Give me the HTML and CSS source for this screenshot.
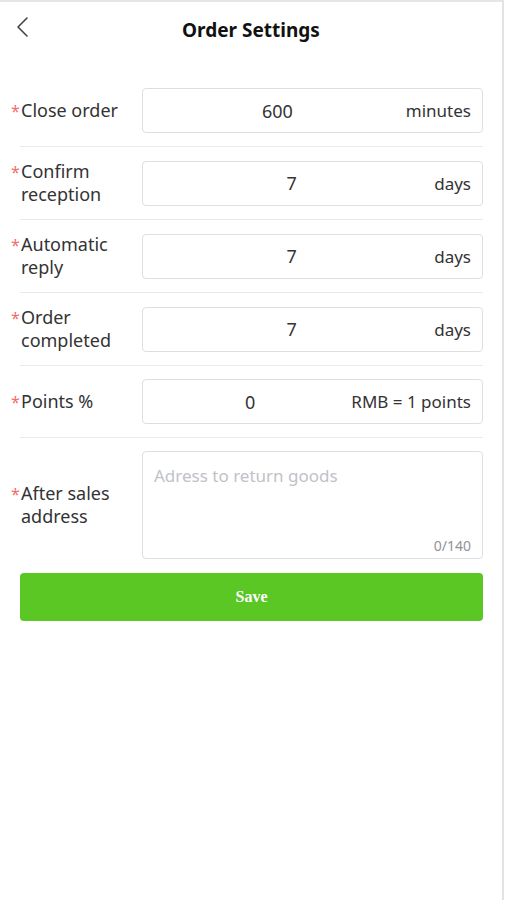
FILE: index.html
```html
<!DOCTYPE html>
<html>
<head>
<meta charset="utf-8">
<link rel="stylesheet" href="styles.css">
</head>
<body>
<div class="page">
  <header class="header">
    <span class="back">
      <svg width="16" height="22" viewBox="0 0 16 22"><path d="M12 2 L3 11 L12 20" fill="none" stroke="#444" stroke-width="1.6" stroke-linecap="round" stroke-linejoin="round"/></svg>
    </span>
    <h1 class="title">Order Settings</h1>
  </header>
  <form class="form">
    <div class="row">
      <label class="label"><span class="req">*</span><span>Close order</span></label>
      <div class="field"><span class="value">600</span><span class="unit">minutes</span></div>
    </div>
    <div class="row">
      <label class="label"><span class="req">*</span><span>Confirm reception</span></label>
      <div class="field"><span class="value">7</span><span class="unit">days</span></div>
    </div>
    <div class="row">
      <label class="label"><span class="req">*</span><span>Automatic reply</span></label>
      <div class="field"><span class="value">7</span><span class="unit">days</span></div>
    </div>
    <div class="row">
      <label class="label"><span class="req">*</span><span>Order completed</span></label>
      <div class="field"><span class="value">7</span><span class="unit">days</span></div>
    </div>
    <div class="row">
      <label class="label"><span class="req">*</span><span>Points %</span></label>
      <div class="field"><span class="value">0</span><span class="unit">RMB = 1 points</span></div>
    </div>
    <div class="row row-last">
      <label class="label"><span class="req">*</span><span>After sales address</span></label>
      <div class="textarea"><span class="placeholder">Adress to return goods</span><span class="count">0/140</span></div>
    </div>
    <button type="button" class="save">Save</button>
  </form>
</div>
</body>
</html>
```
FILE: styles.css
```css
html, body {
  margin: 0;
  padding: 0;
  background: #fff;
}
body {
  font-family: "Noto Sans", "Open Sans", sans-serif;
  color: #333;
}
.page {
  width: 502px;
  height: 898px;
  border-top: 2px solid #e6e6e6;
  border-right: 2px solid #e2e2e2;
  background: #fff;
}
.header {
  height: 56px;
  display: flex;
  align-items: center;
  justify-content: center;
  position: relative;
}
.back {
  position: absolute;
  left: 15px;
  top: 14px;
  display: flex;
}
.title {
  margin: 0;
  font-size: 19px;
  font-weight: 700;
  color: #111;
}
.form {
  padding: 0 19px 0 20px;
  margin-top: 30px;
}
.row {
  display: flex;
  align-items: center;
  padding: 13px 0;
  border-bottom: 1px solid #e9e9e9;
}
.row:first-child {
  padding-top: 0;
}
.row-last {
  border-bottom: none;
  padding-bottom: 14px;
}
.label {
  width: 121px;
  display: flex;
  font-size: 18px;
  line-height: 23px;
  color: #333;
  position: relative;
  padding-left: 1px;
}
.req {
  position: absolute;
  left: -9px;
  top: 1px;
  color: #f56c6c;
  font-size: 16px;
}
.field {
  flex: 1;
  height: 43px;
  border: 1px solid #dcdfe6;
  border-radius: 4px;
  display: flex;
  align-items: center;
  padding: 0 11px 0 10px;
  gap: 4px;
  font-size: 17px;
}
.value {
  flex: 1;
  text-align: center;
  color: #333;
  font-size: 18px;
}
.unit {
  color: #333;
}
.textarea {
  flex: 1;
  border: 1px solid #dcdfe6;
  border-radius: 4px;
  position: relative;
  padding: 12px 11px;
  box-sizing: border-box;
  height: 108px;
}
.placeholder {
  display: block;
  color: #bfc2c8;
  font-size: 17px;
  line-height: 24px;
}
.count {
  position: absolute;
  right: 11px;
  bottom: 3px;
  font-size: 14px;
  color: #909399;
}
.save {
  display: block;
  width: 100%;
  height: 48px;
  border: none;
  border-radius: 4px;
  background: #5ac725;
  color: #fff;
  font-family: "Liberation Serif", serif;
  font-weight: 700;
  font-size: 16px;
}
```
